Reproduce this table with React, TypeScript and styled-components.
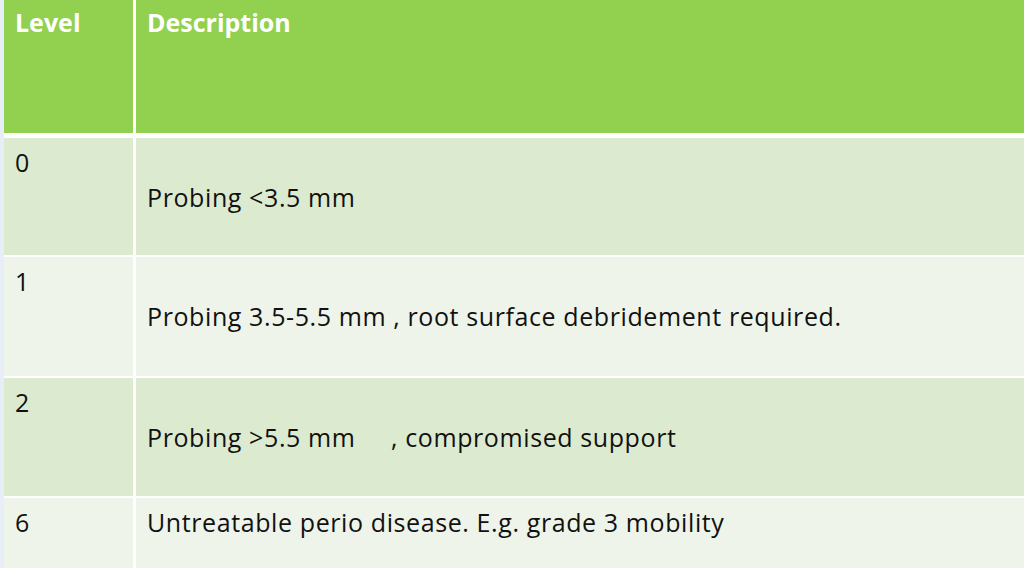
import React from "react";
import styled, { createGlobalStyle } from "styled-components";

const Global = createGlobalStyle`
  html, body { margin: 0; padding: 0; }
  body {
    width: 1024px;
    height: 568px;
    overflow: hidden;
    background: #e8eef7;
    font-family: "Open Sans", Lato, sans-serif;
  }
`;

const Page = styled.div`
  padding-left: 4px;
  height: 568px;
  box-sizing: border-box;
`;

const Table = styled.div`
  display: grid;
  grid-template-columns: 129px 1fr;
  grid-template-rows: 133px 122px 121px 120px 1fr;
  column-gap: 3px;
  background: #ffffff;
  height: 568px;
`;

const Cell = styled.div<{ $tone: "head" | "dark" | "light"; $gapTop: number }>`
  background: ${(p) =>
    p.$tone === "head" ? "#92d050" : p.$tone === "dark" ? "#dcebd0" : "#eef4e9"};
  margin-top: ${(p) => p.$gapTop}px;
  padding: ${(p) => (p.$tone === "head" ? "7px 12px 0 11px" : "9px 12px 0 11px")};
  color: ${(p) => (p.$tone === "head" ? "#ffffff" : "#111111")};
  font-size: 25px;
  font-weight: ${(p) => (p.$tone === "head" ? 700 : 400)};
  letter-spacing: ${(p) => (p.$tone === "head" ? "0" : "0.6px")};
  line-height: 30px;
  box-sizing: border-box;
  white-space: nowrap;
`;

const Desc = styled.div<{ $offset: boolean }>`
  padding-top: ${(p) => (p.$offset ? "35px" : "0")};
`;

const rows = [
  { level: "0", desc: "Probing <3.5 mm", offset: true },
  { level: "1", desc: "Probing 3.5-5.5 mm , root surface debridement required.", offset: true },
  { level: "2", desc: "Probing >5.5 mm\u00a0\u00a0\u00a0\u00a0 , compromised support", offset: true },
  { level: "6", desc: "Untreatable perio disease. E.g. grade 3 mobility", offset: false },
];

export default function App() {
  return (
    <>
      <Global />
      <Page>
        <Table>
          <Cell $tone="head" $gapTop={0}>Level</Cell>
          <Cell $tone="head" $gapTop={0}>Description</Cell>
          {rows.map((r, i) => {
            const tone = i % 2 === 0 ? "dark" : "light";
            const gap = i === 0 ? 5 : 2;
            return (
              <React.Fragment key={r.level}>
                <Cell $tone={tone} $gapTop={gap}>{r.level}</Cell>
                <Cell $tone={tone} $gapTop={gap}>
                  <Desc $offset={r.offset}>{r.desc}</Desc>
                </Cell>
              </React.Fragment>
            );
          })}
        </Table>
      </Page>
    </>
  );
}
